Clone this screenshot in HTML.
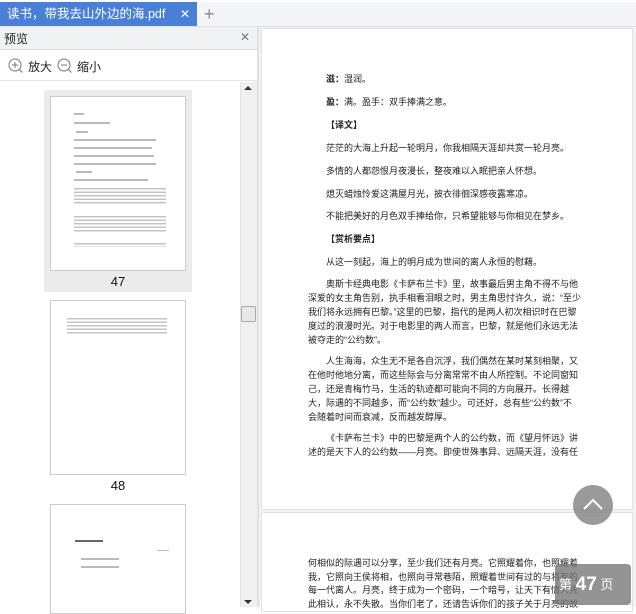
<!DOCTYPE html>
<html><head><meta charset="utf-8"><style>
*{margin:0;padding:0;box-sizing:border-box}
body{width:636px;height:607px;overflow:hidden;background:#fff;font-family:"Liberation Sans","Noto Sans CJK SC",sans-serif;position:relative}
.abs{position:absolute}
.l{position:absolute;white-space:nowrap;font-size:9px;color:#222;line-height:10px}
.b{font-weight:bold}
.tl{position:absolute;height:1.5px;background:#bbb}
.tb{position:absolute;background:repeating-linear-gradient(#c4c4c4 0 1.5px,#fff 1.5px 3.5px)}
</style></head><body>
<div class="abs" style="left:0;top:0;width:636px;height:27px;background:#f3f5f8;border-top:2px solid #fff;border-bottom:1px solid #dde0e4"></div>
<div class="abs" style="left:0;top:2px;width:197px;height:24px;background:#4a7fd6;color:#fff;font-size:12.5px;line-height:24px;padding-left:7px">读书，带我去山外边的海.pdf<span style="position:absolute;left:180px;top:0;font-size:12px">✕</span></div>
<div class="abs" style="left:204px;top:2px;font-size:18px;color:#888;line-height:24px">+</div>
<div class="abs" style="left:0;top:27px;width:258px;height:23px;background:#f1f2f4;border-bottom:1px solid #d9dbde"></div>
<div class="abs" style="left:4px;top:30px;font-size:12px;color:#222">预览</div>
<div class="abs" style="left:240px;top:30px;font-size:12px;color:#777">✕</div>
<div class="abs" style="left:0;top:50px;width:258px;height:31px;background:#fff;border-bottom:1px solid #e4e4e4"></div>
<svg class="abs" style="left:8px;top:58px" width="16" height="16"><circle cx="7" cy="7" r="6" fill="none" stroke="#777" stroke-width="1"/><path d="M4 7h6M7 4v6M11.5 11.5l3 3" stroke="#777" stroke-width="1"/></svg>
<div class="abs" style="left:28px;top:58px;font-size:12px;color:#222">放大</div>
<svg class="abs" style="left:57px;top:58px" width="16" height="16"><circle cx="7" cy="7" r="6" fill="none" stroke="#777" stroke-width="1"/><path d="M4 7h6M11.5 11.5l3 3" stroke="#777" stroke-width="1"/></svg>
<div class="abs" style="left:77px;top:58px;font-size:12px;color:#222">缩小</div>
<div class="abs" style="left:240px;top:82px;width:17px;height:525px;background:#f0f0f0;border-left:1px solid #e2e2e2"></div>
<div class="abs" style="left:244px;top:86px;width:0;height:0;border-left:4px solid transparent;border-right:4px solid transparent;border-bottom:4px solid #333"></div>
<div class="abs" style="left:244px;top:600px;width:0;height:0;border-left:4px solid transparent;border-right:4px solid transparent;border-top:4px solid #333"></div>
<div class="abs" style="left:241px;top:306px;width:15px;height:16px;background:#e8e8e8;border:1px solid #aaa;border-radius:2px"></div>
<div class="abs" style="left:257px;top:27px;width:2px;height:580px;background:#e0e0e0"></div>
<div class="abs" style="left:44px;top:90px;width:148px;height:202px;background:#ebebeb"></div>
<div class="abs" style="left:50px;top:96px;width:136px;height:175px;background:#fff;border:1px solid #ccc"></div>
<div class="abs" style="left:0;top:274px;width:236px;text-align:center;font-size:13px;color:#111">47</div>
<div class="abs" style="left:50px;top:300px;width:136px;height:175px;background:#fff;border:1px solid #ccc"></div>
<div class="abs" style="left:0;top:478px;width:236px;text-align:center;font-size:13px;color:#111">48</div>
<div class="abs" style="left:50px;top:504px;width:136px;height:110px;background:#fff;border:1px solid #ccc"></div>
<div class="tl" style="left:74px;top:113px;width:10px"></div>
<div class="tl" style="left:74px;top:122px;width:36px"></div>
<div class="tl" style="left:76px;top:131px;width:12px"></div>
<div class="tl" style="left:74px;top:139px;width:82px"></div>
<div class="tl" style="left:74px;top:147px;width:78px"></div>
<div class="tl" style="left:74px;top:155px;width:80px"></div>
<div class="tl" style="left:74px;top:163px;width:82px"></div>
<div class="tl" style="left:76px;top:171px;width:16px"></div>
<div class="tl" style="left:74px;top:179px;width:74px"></div>
<div class="tb" style="left:74px;top:188px;width:92px;height:17px"></div>
<div class="tb" style="left:74px;top:216px;width:92px;height:17px"></div>
<div class="tb" style="left:74px;top:243px;width:92px;height:4px"></div>
<div class="tb" style="left:67px;top:318px;width:100px;height:17px"></div>
<div class="tl" style="left:75px;top:540px;width:28px;height:2px;background:#666"></div>
<div class="tl" style="left:157px;top:550px;width:12px;height:1px"></div>
<div class="tl" style="left:81px;top:558px;width:38px"></div>
<div class="tl" style="left:81px;top:566px;width:38px"></div>
<div class="abs" style="left:259px;top:27px;width:377px;height:580px;background:#f2f2f2"></div>
<div class="abs" style="left:261px;top:28px;width:372px;height:482px;background:#fff;border:1px solid #e2e2e2"></div>
<div class="abs" style="left:261px;top:512px;width:372px;height:100px;background:#fff;border:1px solid #e2e2e2"></div>
<div class="l" style="left:326px;top:74px"><b>滋：</b>湿润。</div>
<div class="l" style="left:326px;top:97px"><b>盈：</b>满。盈手：双手捧满之意。</div>
<div class="l b" style="left:326px;top:120px">【译文】</div>
<div class="l" style="left:326px;top:143px">茫茫的大海上升起一轮明月，你我相隔天涯却共赏一轮月亮。</div>
<div class="l" style="left:326px;top:166px">多情的人都怨恨月夜漫长，整夜难以入眠把亲人怀想。</div>
<div class="l" style="left:326px;top:189px">熄灭蜡烛怜爱这满屋月光，披衣徘徊深感夜露寒凉。</div>
<div class="l" style="left:326px;top:211px">不能把美好的月色双手捧给你，只希望能够与你相见在梦乡。</div>
<div class="l b" style="left:326px;top:234px">【赏析要点】</div>
<div class="l" style="left:326px;top:257px">从这一刻起，海上的明月成为世间的离人永恒的慰藉。</div>
<div class="l" style="left:326px;top:279px">奥斯卡经典电影《卡萨布兰卡》里，故事最后男主角不得不与他</div>
<div class="l" style="left:308px;top:293px">深爱的女主角告别，执手相看泪眼之时，男主角思忖许久，说：“至少</div>
<div class="l" style="left:308px;top:307px">我们将永远拥有巴黎。”这里的巴黎，指代的是两人初次相识时在巴黎</div>
<div class="l" style="left:308px;top:321px">度过的浪漫时光。对于电影里的两人而言，巴黎，就是他们永远无法</div>
<div class="l" style="left:308px;top:335px">被夺走的“公约数”。</div>
<div class="l" style="left:326px;top:356px">人生海海，众生无不是各自沉浮，我们偶然在某时某刻相聚，又</div>
<div class="l" style="left:308px;top:370px">在他时他地分离，而这些际会与分离常常不由人所控制。不论同窗知</div>
<div class="l" style="left:308px;top:384px">己，还是青梅竹马，生活的轨迹都可能向不同的方向展开。长得越</div>
<div class="l" style="left:308px;top:398px">大，际遇的不同越多，而“公约数”越少。可还好，总有些“公约数”不</div>
<div class="l" style="left:308px;top:412px">会随着时间而衰减，反而越发醇厚。</div>
<div class="l" style="left:326px;top:433px">《卡萨布兰卡》中的巴黎是两个人的公约数，而《望月怀远》讲</div>
<div class="l" style="left:308px;top:447px">述的是天下人的公约数——月亮。即使世殊事异、远隔天涯，没有任</div>
<div class="l" style="left:308px;top:558px">何相似的际遇可以分享，至少我们还有月亮。它照耀着你，也照耀着</div>
<div class="l" style="left:308px;top:572px">我，它照向王侯将相，也照向寻常巷陌，照耀着世间有过的与将有的</div>
<div class="l" style="left:308px;top:585px">每一代离人。月亮，终于成为一个密码，一个暗号，让天下有情人凭</div>
<div class="l" style="left:308px;top:599px">此相认，永不失散。当你们老了，还请告诉你们的孩子关于月亮的故</div>
<div class="abs" style="left:573px;top:485px;width:40px;height:40px;border-radius:50%;background:rgba(120,120,120,.75)"></div>
<svg class="abs" style="left:573px;top:485px" width="40" height="40"><path d="M11 24l9-9 9 9" fill="none" stroke="#fff" stroke-width="2"/></svg>
<div class="abs" style="left:555px;top:564px;width:76px;height:41px;border-radius:4px;background:rgba(120,120,120,.8);color:#fff;font-size:13px;line-height:41px;padding-left:4px;white-space:nowrap">第 <b style="font-size:19px;vertical-align:-1px">47</b> 页</div>
</body></html>
